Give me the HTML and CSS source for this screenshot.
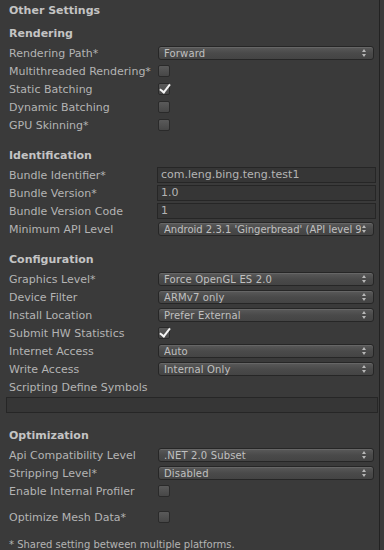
FILE: index.html
```html
<!DOCTYPE html>
<html lang="en">
<head>
    <meta charset="UTF-8">
    <meta name="viewport" content="width=device-width, initial-scale=1.0">
    <title>Player Settings</title>
    <link rel="stylesheet" href="styles.css">
</head>
<body>
    <div class="inspector">
        <div class="title">Other Settings</div>

        <!-- Rendering -->
        <div class="section first">
            <div class="section-head">Rendering</div>
            <div class="row"><span class="label">Rendering Path*</span><div class="popup"><span>Forward</span><i class="arrows"></i></div></div>
            <div class="row"><span class="label">Multithreaded Rendering*</span><span class="check"></span></div>
            <div class="row"><span class="label">Static Batching</span><span class="check on"></span></div>
            <div class="row"><span class="label">Dynamic Batching</span><span class="check"></span></div>
            <div class="row"><span class="label">GPU Skinning*</span><span class="check"></span></div>
        </div>

        <!-- Identification -->
        <div class="section">
            <div class="section-head">Identification</div>
            <div class="row"><span class="label">Bundle Identifier*</span><div class="field">com.leng.bing.teng.test1</div></div>
            <div class="row"><span class="label">Bundle Version*</span><div class="field">1.0</div></div>
            <div class="row"><span class="label">Bundle Version Code</span><div class="field">1</div></div>
            <div class="row"><span class="label">Minimum API Level</span><div class="popup"><span class="long">Android 2.3.1 'Gingerbread' (API level 9</span><i class="arrows"></i></div></div>
        </div>

        <!-- Configuration -->
        <div class="section">
            <div class="section-head">Configuration</div>
            <div class="row"><span class="label">Graphics Level*</span><div class="popup"><span>Force OpenGL ES 2.0</span><i class="arrows"></i></div></div>
            <div class="row"><span class="label">Device Filter</span><div class="popup"><span>ARMv7 only</span><i class="arrows"></i></div></div>
            <div class="row"><span class="label">Install Location</span><div class="popup"><span>Prefer External</span><i class="arrows"></i></div></div>
            <div class="row"><span class="label">Submit HW Statistics</span><span class="check on"></span></div>
            <div class="row"><span class="label">Internet Access</span><div class="popup"><span>Auto</span><i class="arrows"></i></div></div>
            <div class="row"><span class="label">Write Access</span><div class="popup"><span>Internal Only</span><i class="arrows"></i></div></div>
            <div class="row"><span class="label">Scripting Define Symbols</span></div>
            <div class="row wide"><div class="field"></div></div>
        </div>

        <!-- Optimization -->
        <div class="section">
            <div class="section-head">Optimization</div>
            <div class="row"><span class="label">Api Compatibility Level</span><div class="popup"><span>.NET 2.0 Subset</span><i class="arrows"></i></div></div>
            <div class="row"><span class="label">Stripping Level*</span><div class="popup"><span>Disabled</span><i class="arrows"></i></div></div>
            <div class="row"><span class="label">Enable Internal Profiler</span><span class="check"></span></div>
            <div class="row spaced"><span class="label">Optimize Mesh Data*</span><span class="check"></span></div>
        </div>

        <div class="note">* Shared setting between multiple platforms.</div>
    </div>
</body>
</html>
```

FILE: styles.css
```css
/* base */
body { margin: 0; background-color: #3a3a3a; color: #b4b4b4; font-family: "DejaVu Sans", Verdana, sans-serif; font-size: 11px; }
.inspector { width: 380px; height: 550px; border-right: 1px solid #222; box-sizing: border-box; }

/* headings */
.title { height: 21px; line-height: 21px; padding-left: 9px; font-weight: bold; color: #c4c4c4; }
.section { margin-top: 11px; }
.section.first { margin-top: 2px; }
.section-head { height: 21px; line-height: 21px; padding-left: 9px; font-weight: bold; color: #c4c4c4; }

/* rows */
.row { display: flex; align-items: center; height: 18px; padding: 0 5px 0 9px; }
.row.wide { padding-left: 7px; padding-right: 3px; }
.row.spaced { margin-top: 8px; }
.label { width: 149px; flex-shrink: 0; white-space: nowrap; }

/* popup buttons */
.popup { flex-grow: 1; height: 14px; display: flex; align-items: center; padding: 0 6px 0 5px; border: 1px solid #262626; border-radius: 3px; background: linear-gradient(#5a5a5a, #4a4a4a 50%, #444); box-shadow: inset 0 1px 0 rgba(255,255,255,0.08); color: #c0c0c0; font-size: 10px; letter-spacing: 0.15px; box-sizing: border-box; overflow: hidden; }
.popup span { flex-grow: 1; white-space: nowrap; overflow: hidden; }
.popup span.long { letter-spacing: 0; }
.arrows { width: 5px; height: 8px; flex-shrink: 0; margin-left: 1px; position: relative; }
.arrows::before, .arrows::after { content: ""; position: absolute; left: 0; border-left: 2.5px solid transparent; border-right: 2.5px solid transparent; }
.arrows::before { top: 0; border-bottom: 3px solid #b8b8b8; }
.arrows::after { bottom: 0; border-top: 3px solid #b8b8b8; }

/* text fields */
.field { flex-grow: 1; height: 16px; line-height: 14px; margin: 0 -2px 0 -1px; padding: 0 3px; border: 1px solid #262626; background-color: #363636; color: #b4b4b4; box-sizing: border-box; white-space: nowrap; overflow: hidden; }

/* checkboxes */
.check { width: 12px; height: 12px; box-sizing: border-box; border: 1px solid #2a2a2a; border-radius: 2px; background: linear-gradient(#5a5a5a, #474747); position: relative; }
.check.on::after { content: ""; position: absolute; left: 3px; top: -2px; width: 4px; height: 9px; border: solid #f4f4f4; border-width: 0 2px 2px 0; transform: rotate(38deg); }

.note { margin-top: 13px; padding-left: 9px; font-size: 10px; line-height: 12px; }
```
